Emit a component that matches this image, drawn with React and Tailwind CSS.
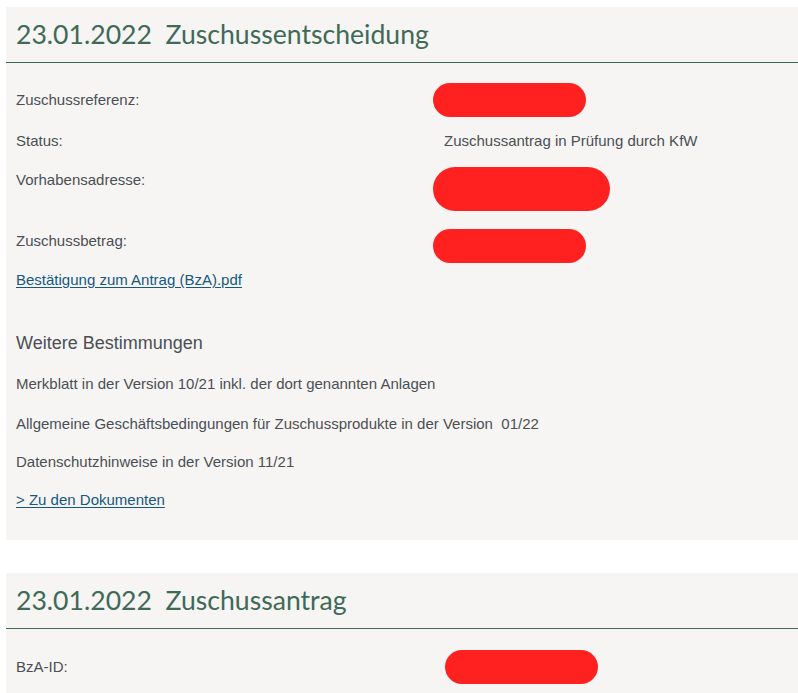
const Pill = ({ w, h, className = "" }) => (
  <div className={`bg-[#ff2020] rounded-full ${w} ${h} ${className}`} />
);

const CardHeader = ({ date, title }) => (
  <div className="h-[56px] border-b border-[#3f6a57] flex items-center px-[10px]">
    <h2 className="text-[26.6px] leading-none text-[#3f6a57] font-['Lato',sans-serif] whitespace-pre">
      {date}  {title}
    </h2>
  </div>
);

const App = () => {
  const textCls = "text-[15px] leading-[20px] text-[#4b4f55]";
  const linkCls = "text-[15px] leading-[20px] text-[#17587f] underline underline-offset-2";

  return (
    <div className="w-[798px] min-h-screen bg-white pt-[7px] pl-[6px] font-['Liberation_Sans',Arial,sans-serif]">
      <section className="bg-[#f6f5f3] pb-[28px]">
        <CardHeader date="23.01.2022" title="Zuschussentscheidung" />
        <div className="px-[10px]">
          <div className="flex items-center h-[34px] mt-[20px]">
            <div className={`w-[428px] ${textCls}`}>Zuschussreferenz:</div>
            <Pill w="w-[153px]" h="h-[34px]" className="-ml-[11px]" />
          </div>
          <div className="flex items-center h-[20px] mt-[14px]">
            <div className={`w-[428px] ${textCls}`}>Status:</div>
            <div className={textCls}>Zuschussantrag in Prüfung durch KfW</div>
          </div>
          <div className="flex items-start mt-[16px]">
            <div className={`w-[428px] pt-[3px] ${textCls}`}>Vorhabensadresse:</div>
            <Pill w="w-[177px]" h="h-[44px]" className="-ml-[11px]" />
          </div>
          <div className="flex items-start mt-[18px]">
            <div className={`w-[428px] pt-[2px] ${textCls}`}>Zuschussbetrag:</div>
            <Pill w="w-[153px]" h="h-[34px]" className="-ml-[11px]" />
          </div>
          <div className="mt-[5px]">
            <a href="#" className={linkCls}>Bestätigung zum Antrag (BzA).pdf</a>
          </div>

          <h3 className="mt-[40px] text-[18px] leading-[22px] text-[#4b4f55]">Weitere Bestimmungen</h3>
          <p className={`mt-[20px] ${textCls}`}>Merkblatt in der Version 10/21 inkl. der dort genannten Anlagen</p>
          <p className={`mt-[20px] ${textCls} whitespace-pre`}>Allgemeine Geschäftsbedingungen für Zuschussprodukte in der Version  01/22</p>
          <p className={`mt-[18px] ${textCls}`}>Datenschutzhinweise in der Version 11/21</p>
          <div className="mt-[16px]">
            <a href="#" className={linkCls}>&gt; Zu den Dokumenten</a>
          </div>
        </div>
      </section>

      <section className="bg-[#f6f5f3] mt-[33px] pb-[30px]">
        <CardHeader date="23.01.2022" title="Zuschussantrag" />
        <div className="px-[10px]">
          <div className="flex items-center h-[34px] mt-[21px]">
            <div className={`w-[428px] ${textCls}`}>BzA-ID:</div>
            <Pill w="w-[153px]" h="h-[34px]" className="ml-[1px]" />
          </div>
        </div>
      </section>
    </div>
  );
};

export default App;
